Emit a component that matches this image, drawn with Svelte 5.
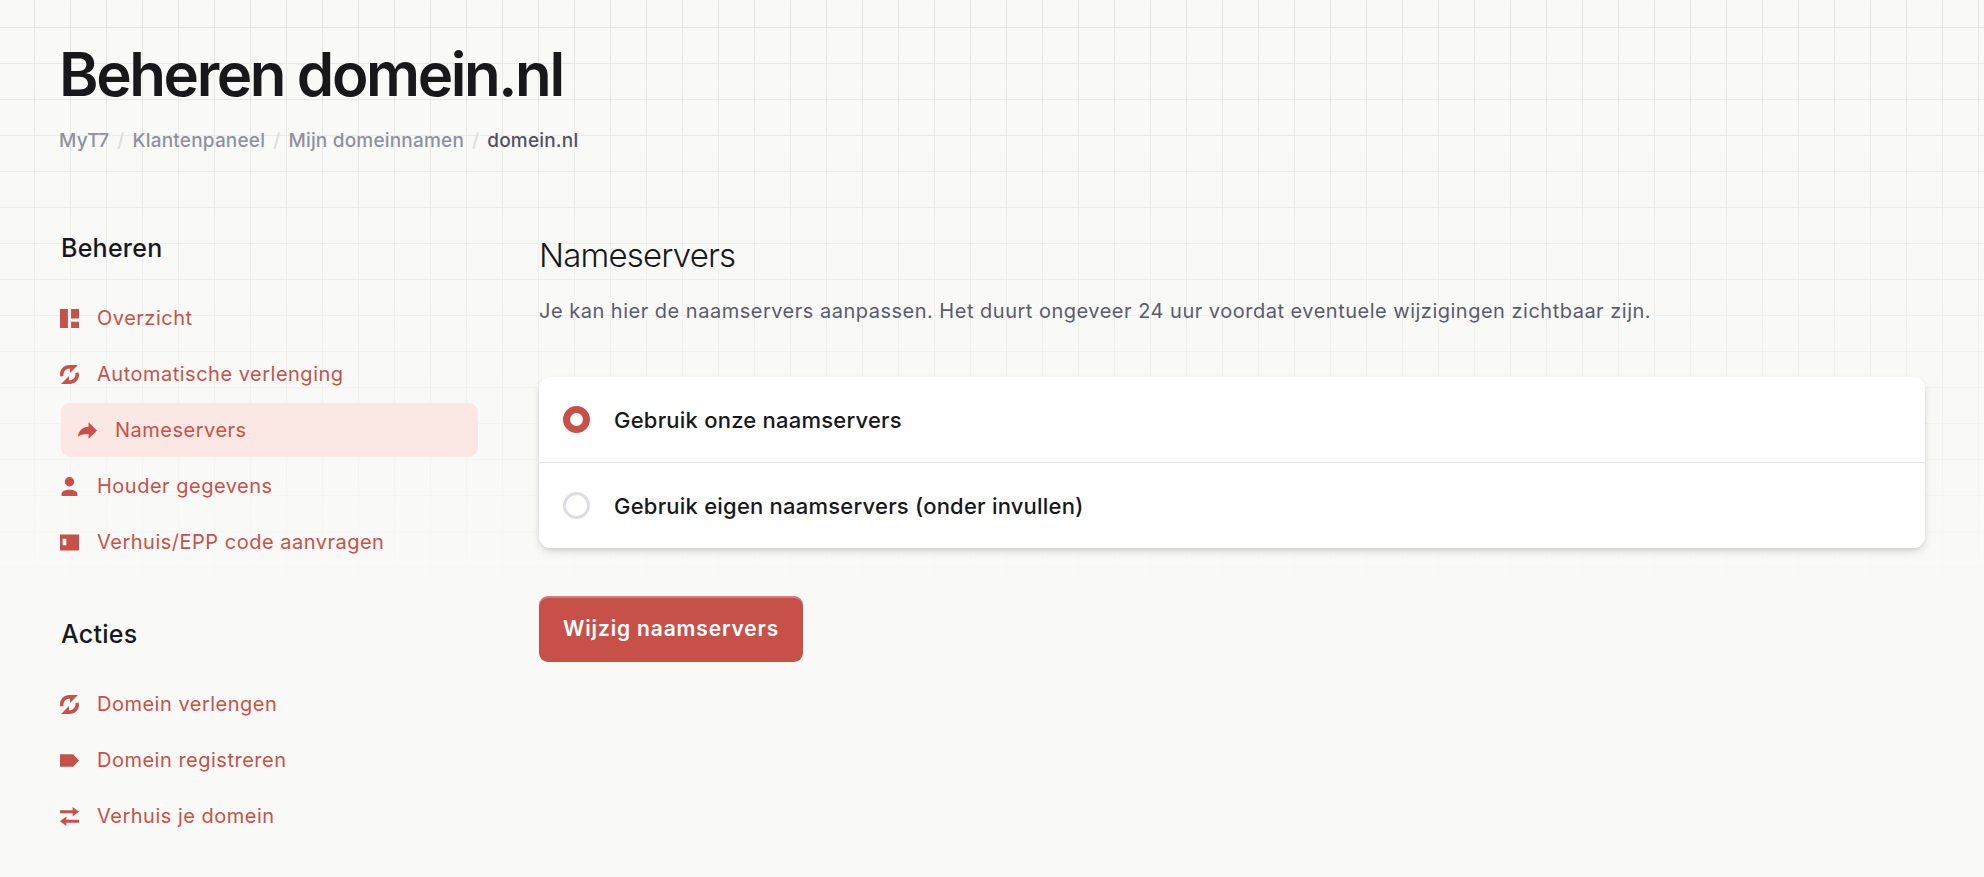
<script>
  let choice = "ours";

  const crumbs = ["MyT7", "Klantenpaneel", "Mijn domeinnamen"];

  const menus = [
    {
      title: "Beheren",
      items: [
        { label: "Overzicht", icon: "grid" },
        { label: "Automatische verlenging", icon: "refresh" },
        { label: "Nameservers", icon: "share", active: true },
        { label: "Houder gegevens", icon: "user" },
        { label: "Verhuis/EPP code aanvragen", icon: "code" }
      ]
    },
    {
      title: "Acties",
      items: [
        { label: "Domein verlengen", icon: "refresh" },
        { label: "Domein registreren", icon: "tag" },
        { label: "Verhuis je domein", icon: "transfer" }
      ]
    }
  ];

  const icons = {
    grid: "M0 0H7.5V18H0ZM10.5 0H18V9H10.5ZM10.5 12H18V18H10.5Z",
    refresh:
      "M.3 11C-1 5 3 0 9 0H17L9.5 7.6V3.4C5.5 3.4 2.8 6.6 3.3 10.4ZM17.7 7C19 13 15 18 9 18H1L8.5 10.4V14.6C12.5 14.6 15.2 11.4 14.7 7.6Z",
    share: "M10 1.3L18 9L10 16.7V12.4C6 12 3 12.5 0 15C.4 9.4 4 5.6 10 5.4Z",
    user: "M9 0A4.5 4.5 0 1 1 9 9A4.5 4.5 0 1 1 9 0ZM1.5 18V16C1.5 13.5 4.5 12 9 12S16.5 13.5 16.5 16V18Z",
    code: "M0 1.5H18V16.5H0ZM2.500 5.5V11.5H6V5.5Z",
    tag: "M0 3H12.5L18 9L12.5 15H0Z",
    transfer: "M0 3H12V0L18 4.5L12 9V6H0ZM18 12H6V9L0 13.5L6 18V15H18Z"
  };

  const options = [
    { value: "ours", label: "Gebruik onze naamservers" },
    { value: "own", label: "Gebruik eigen naamservers (onder invullen)" }
  ];
</script>

<div class="page">
  <header>
    <h1>Beheren domein.nl</h1>
    <nav class="crumbs" aria-label="Kruimelpad">
      {#each crumbs as crumb}
        <a href="#top">{crumb}</a>
        <span class="slash">/</span>
      {/each}
      <span class="current">domein.nl</span>
    </nav>
  </header>

  <div class="columns">
    <aside>
      {#each menus as menu}
        <section>
          <h3>{menu.title}</h3>
          <ul>
            {#each menu.items as item}
              <li>
                <a href="#top" class:active={item.active}>
                  <svg viewBox="0 0 18 18" aria-hidden="true">
                    <path fill-rule="evenodd" d={icons[item.icon]} />
                  </svg>
                  {item.label}
                </a>
              </li>
            {/each}
          </ul>
        </section>
      {/each}
    </aside>

    <main>
      <h2>Nameservers</h2>
      <p>Je kan hier de naamservers aanpassen. Het duurt ongeveer 24 uur voordat eventuele wijzigingen zichtbaar zijn.</p>
      <form on:submit|preventDefault>
        <div class="card">
          {#each options as option}
            <label>
              <input type="radio" name="nameservers" value={option.value} bind:group={choice} />
              {option.label}
            </label>
          {/each}
        </div>
        <button type="submit">Wijzig naamservers</button>
      </form>
    </main>
  </div>
</div>

<style>
  :global(body) {
    background: #f9f9f7;
  }
  .page {
    position: relative;
    z-index: 0;
    padding: 38px 59px 32px;
    font-family: Inter, sans-serif;
    font-size: 20px;
    line-height: 32px;
    color: #18181b;
  }
  .page::before {
    content: "";
    position: absolute;
    z-index: -1;
    top: 0;
    left: 0;
    right: 0;
    height: 610px;
    background-image: linear-gradient(to right, #e4e4e2 1px, transparent 1px),
      linear-gradient(to bottom, #e4e4e2 1px, transparent 1px);
    background-size: 36px 36px;
    background-position: 34px 27px;
    -webkit-mask-image: linear-gradient(#000, transparent);
    mask-image: linear-gradient(#000, transparent);
  }
  h1, h2, h3, p, ul {
    margin: 0;
    padding: 0;
  }
  h1 {
    font-size: 60px;
    line-height: 72px;
    font-weight: 600;
    letter-spacing: -0.04em;
  }
  .crumbs {
    display: flex;
    gap: 8px;
    margin-top: 15px;
    font-size: 19px;
    font-weight: 500;
    letter-spacing: 0.01em;
  }
  .crumbs a {
    color: #8f919d;
    text-decoration: none;
  }
  .slash {
    color: #dcdde2;
  }
  .current {
    color: #52525f;
  }
  .columns {
    display: grid;
    grid-template-columns: 417px minmax(0, 1fr);
    gap: 61px;
    margin-top: 75px;
    padding-left: 2px;
  }
  section + section {
    margin-top: 49px;
  }
  h3 {
    font-size: 25px;
    line-height: 32px;
    font-weight: 500;
    letter-spacing: 0.01em;
    margin-bottom: 27px;
  }
  ul {
    display: flex;
    flex-direction: column;
    gap: 2px;
    list-style: none;
  }
  li a {
    display: flex;
    align-items: center;
    gap: 18px;
    height: 54px;
    border-radius: 9px;
    color: #c75149;
    letter-spacing: 0.025em;
    text-decoration: none;
  }
  li a.active {
    padding: 0 18px;
    background: #fbe8e5;
  }
  svg {
    width: 19px;
    height: 19px;
    margin-left: -1px;
    fill: currentColor;
  }
  h2 {
    font-size: 33px;
    line-height: 40px;
    font-weight: 300;
    letter-spacing: -0.025em;
    margin-top: 3px;
  }
  p {
    margin-top: 20px;
    color: #5a5c69;
    letter-spacing: 0.025em;
  }
  .card {
    margin-top: 50px;
    border-radius: 11px;
    background: #fff;
    box-shadow: 0 4px 8px -1px rgba(0, 0, 0, 0.14), 0 2px 4px -1px rgba(0, 0, 0, 0.08);
  }
  label {
    display: flex;
    align-items: center;
    gap: 24px;
    height: 85px;
    padding: 0 24px;
    font-size: 22px;
    font-weight: 500;
    letter-spacing: 0.01em;
  }
  label + label {
    border-top: 1px solid #e4e4e7;
  }
  input {
    appearance: none;
    box-sizing: border-box;
    width: 27px;
    height: 27px;
    margin: 0;
    border: 3px solid #dcdde2;
    border-radius: 50%;
    background: #fff;
  }
  input:checked {
    border: 7px solid #c75149;
  }
  button {
    height: 66px;
    margin-top: 48px;
    padding: 0 24px;
    border: 0;
    border-radius: 9px;
    background: #c75149;
    box-shadow: inset 0 2px 0 rgba(255, 255, 255, 0.25);
    color: #fff;
    font: 600 21px/32px Inter, sans-serif;
    letter-spacing: 0.04em;
  }
</style>
